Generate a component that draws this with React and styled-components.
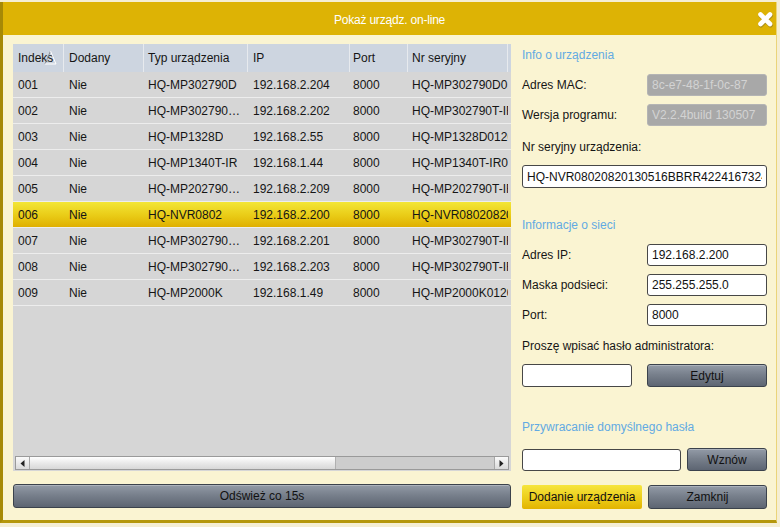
import React from 'react';
import styled, { createGlobalStyle } from 'styled-components';

const GlobalStyle = createGlobalStyle`
  html, body {
    margin: 0;
    padding: 0;
  }
  body {
    background: linear-gradient(#f5eed3 0, #f5eed3 524px, #e3e3e3 524px);
    font-family: "Liberation Sans", Arial, sans-serif;
    font-size: 12px;
    color: #151515;
  }
`;

const FONT = `12px "Liberation Sans", Arial, sans-serif`;
const COLS = '51px 80px 104px 102px 58px 100px';

const Window = styled.div`
  margin-top: 2px;
  width: 777px;
  height: 521px;
  box-sizing: border-box;
  border-left: 3px solid #a68906;
  border-bottom: 3px solid #b5970b;
  border-right: 1px solid #ead47a;
  background: #faf4d2;
  display: flex;
  flex-direction: column;
`;

const TitleBar = styled.div`
  position: relative;
  height: 33px;
  flex-shrink: 0;
  background: #ddb305;
  color: #fff;
  display: flex;
  align-items: center;
  justify-content: center;
  padding-top: 2px;
  box-sizing: border-box;
  font: ${FONT};
  letter-spacing: -0.2px;
`;

const CloseButton = styled.div`
  position: absolute;
  right: 1px;
  top: 8px;
  width: 19px;
  height: 19px;
`;

const Body = styled.div`
  flex: 1;
  display: flex;
  gap: 11px;
  padding: 9px 9px 12px 10px;
  min-height: 0;
`;

const LeftCol = styled.div`
  width: 498px;
  display: flex;
  flex-direction: column;
  gap: 13px;
`;

const TablePanel = styled.div`
  flex: 1;
  background: #d6d6d6;
  display: flex;
  flex-direction: column;
  overflow: hidden;
`;

const Rows = styled.div`
  flex: 1;
`;

const HeaderRow = styled.div`
  display: grid;
  grid-template-columns: ${COLS};
  height: 28px;
  background: #cdd5e0;
`;

const HeaderCell = styled.div`
  position: relative;
  display: flex;
  align-items: center;
  padding-left: ${({ $pad }) => $pad}px;
  border-right: 1px solid #e7eaee;
  white-space: nowrap;
  overflow: hidden;
`;

const SortMark = styled.svg`
  position: absolute;
  left: 31px;
  top: 6px;
`;

const Row = styled.div`
  display: grid;
  grid-template-columns: ${COLS};
  height: 26px;
  box-sizing: border-box;
  border-bottom: 1px solid #ededed;
  background: ${({ $selected }) =>
    $selected ? 'linear-gradient(#f3e637, #e9cb16 55%, #dfaf00)' : 'transparent'};
`;

const Cell = styled.div`
  display: flex;
  align-items: center;
  padding: 0 ${({ $clip }) => ($clip ? 0 : 3)}px 0 ${({ $pad }) => $pad}px;
  min-width: 0;
  span {
    white-space: nowrap;
    overflow: hidden;
    text-overflow: ${({ $clip }) => ($clip ? 'clip' : 'ellipsis')};
  }
`;

const ScrollBar = styled.div`
  height: 14px;
  margin: 0 2px 1px 2px;
  display: flex;
  box-sizing: border-box;
  border: 1px solid #9a9a9a;
  background: #cdcdcd;
`;

const ScrollArrow = styled.div`
  width: 13px;
  display: flex;
  align-items: center;
  justify-content: center;
  background: linear-gradient(#fafafa, #dadada);
  border-${({ $side }) => ($side === 'left' ? 'right' : 'left')}: 1px solid #a8a8a8;
`;

const ScrollTrack = styled.div`
  flex: 1;
  display: flex;
`;

const ScrollThumb = styled.div`
  width: 305px;
  background: linear-gradient(#ffffff, #e6e6e6 60%, #d8d8d8);
  border-right: 1px solid #b0b0b0;
`;

const Button = styled.button`
  width: ${({ $w }) => ($w ? `${$w}px` : '100%')};
  height: ${({ $h }) => $h}px;
  flex-shrink: 0;
  box-sizing: border-box;
  padding: 0;
  font: ${FONT};
  color: #111;
  border-radius: 3px;
  border: 1px solid #3b424c;
  background: linear-gradient(#939ba7, #78808c 45%, #5d6572);
  box-shadow: inset 0 1px 0 rgba(255, 255, 255, 0.25);
`;

const YellowButton = styled(Button)`
  border: none;
  border-radius: 2px;
  box-shadow: none;
  background: linear-gradient(#f6e53e, #eccd1a 55%, #e2b300);
`;

const RightCol = styled.div`
  width: 245px;
  display: flex;
  flex-direction: column;
`;

const SectionTitle = styled.div`
  height: 22px;
  line-height: 22px;
  color: #62aae2;
  margin-top: ${({ $mt }) => $mt}px;
`;

const Label = styled.div`
  height: 16px;
  line-height: 16px;
  margin-top: ${({ $mt }) => $mt || 0}px;
`;

const FieldRow = styled.div`
  display: flex;
  align-items: center;
  justify-content: space-between;
  margin-top: ${({ $mt }) => $mt}px;
`;

const TextInput = styled.input`
  width: ${({ $w }) => ($w ? `${$w}px` : '100%')};
  height: ${({ $h }) => $h}px;
  box-sizing: border-box;
  border: 1px solid #474747;
  border-radius: 3px;
  background: #fff;
  padding: 0 4px;
  font: ${FONT};
  color: #111;
  outline: none;
  &:disabled {
    background: #a8a8a8;
    border-color: #b4b4b4;
    color: #d3d3d3;
  }
`;

const columns = [
  { title: 'Indeks', pad: 5 },
  { title: 'Dodany', pad: 5 },
  { title: 'Typ urządzenia', pad: 4 },
  { title: 'IP', pad: 5 },
  { title: 'Port', pad: 3 },
  { title: 'Nr seryjny', pad: 4 },
];

const devices = [
  ['001', 'Nie', 'HQ-MP302790D', '192.168.2.204', '8000', 'HQ-MP302790D0120130507'],
  ['002', 'Nie', 'HQ-MP302790T-IR', '192.168.2.202', '8000', 'HQ-MP302790T-IR0120130507'],
  ['003', 'Nie', 'HQ-MP1328D', '192.168.2.55', '8000', 'HQ-MP1328D0120130415'],
  ['004', 'Nie', 'HQ-MP1340T-IR', '192.168.1.44', '8000', 'HQ-MP1340T-IR0120130415'],
  ['005', 'Nie', 'HQ-MP202790T-IR', '192.168.2.209', '8000', 'HQ-MP202790T-IR0120130507'],
  ['006', 'Nie', 'HQ-NVR0802', '192.168.2.200', '8000', 'HQ-NVR08020820130516'],
  ['007', 'Nie', 'HQ-MP302790T-IR', '192.168.2.201', '8000', 'HQ-MP302790T-IR0120130507'],
  ['008', 'Nie', 'HQ-MP302790T-IR', '192.168.2.203', '8000', 'HQ-MP302790T-IR0120130507'],
  ['009', 'Nie', 'HQ-MP2000K', '192.168.1.49', '8000', 'HQ-MP2000K0120130415'],
];

const CloseIcon = () => (
  <svg width="19" height="19" viewBox="0 0 19 19">
    <g stroke="#8d7a2a" strokeWidth="5" strokeLinecap="round" opacity="0.6">
      <path d="M5 5.5 L14.5 15 M14.5 5.5 L5 15" />
    </g>
    <g stroke="#ffffff" strokeWidth="4.6" strokeLinecap="round">
      <path d="M4.5 4.5 L14 14 M14 4.5 L4.5 14" />
    </g>
  </svg>
);

const Arrow = ({ dir }) => (
  <svg width="5" height="7" viewBox="0 0 5 7">
    <path d={dir === 'left' ? 'M4.5 0 L0.5 3.5 L4.5 7 Z' : 'M0.5 0 L4.5 3.5 L0.5 7 Z'} fill="#222" />
  </svg>
);

export default function App() {
  return (
    <>
      <GlobalStyle />
      <Window>
        <TitleBar>
          Pokaż urządz. on-line
          <CloseButton>
            <CloseIcon />
          </CloseButton>
        </TitleBar>
        <Body>
          <LeftCol>
            <TablePanel>
              <Rows>
                <HeaderRow>
                  {columns.map((c, i) => (
                    <HeaderCell key={c.title} $pad={c.pad}>
                      {c.title}
                      {i === 0 && (
                        <SortMark width="13" height="15" viewBox="0 0 13 15">
                          <path d="M6.5 1 L1 14" stroke="#8a8f96" strokeWidth="1" fill="none" />
                          <path d="M6.5 1 L12 14 L1 14" stroke="#ffffff" strokeWidth="1" fill="none" />
                        </SortMark>
                      )}
                    </HeaderCell>
                  ))}
                </HeaderRow>
                {devices.map((d) => (
                  <Row key={d[0]} $selected={d[0] === '006'}>
                    {d.map((v, i) => (
                      <Cell key={i} $pad={columns[i].pad} $clip={i === 5}>
                        <span>{v}</span>
                      </Cell>
                    ))}
                  </Row>
                ))}
              </Rows>
              <ScrollBar>
                <ScrollArrow $side="left">
                  <Arrow dir="left" />
                </ScrollArrow>
                <ScrollTrack>
                  <ScrollThumb />
                </ScrollTrack>
                <ScrollArrow $side="right">
                  <Arrow dir="right" />
                </ScrollArrow>
              </ScrollBar>
            </TablePanel>
            <Button $h={24}>Odśwież co 15s</Button>
          </LeftCol>

          <RightCol>
            <SectionTitle $mt={0}>Info o urządzenia</SectionTitle>
            <FieldRow $mt={8}>
              <span>Adres MAC:</span>
              <TextInput $w={120} $h={22} disabled defaultValue="8c-e7-48-1f-0c-87" />
            </FieldRow>
            <FieldRow $mt={8}>
              <span>Wersja programu:</span>
              <TextInput $w={120} $h={22} disabled defaultValue="V2.2.4build 130507" />
            </FieldRow>
            <Label $mt={13}>Nr seryjny urządzenia:</Label>
            <FieldRow $mt={10}>
              <TextInput $h={23} defaultValue="HQ-NVR08020820130516BBRR4224167324WCVU" />
            </FieldRow>

            <SectionTitle $mt={26}>Informacje o sieci</SectionTitle>
            <FieldRow $mt={8}>
              <span>Adres IP:</span>
              <TextInput $w={120} $h={22} defaultValue="192.168.2.200" />
            </FieldRow>
            <FieldRow $mt={8}>
              <span>Maska podsieci:</span>
              <TextInput $w={120} $h={22} defaultValue="255.255.255.0" />
            </FieldRow>
            <FieldRow $mt={8}>
              <span>Port:</span>
              <TextInput $w={120} $h={22} defaultValue="8000" />
            </FieldRow>
            <Label $mt={12}>Proszę wpisać hasło administratora:</Label>
            <FieldRow $mt={10}>
              <TextInput $w={110} $h={23} type="password" />
              <Button $w={120} $h={23}>Edytuj</Button>
            </FieldRow>

            <SectionTitle $mt={29}>Przywracanie domyślnego hasła</SectionTitle>
            <FieldRow $mt={10}>
              <TextInput $w={159} $h={22} />
              <Button $w={80} $h={23}>Wznów</Button>
            </FieldRow>
            <FieldRow $mt={14}>
              <YellowButton $w={120} $h={24}>Dodanie urządzenia</YellowButton>
              <Button $w={119} $h={24}>Zamknij</Button>
            </FieldRow>
          </RightCol>
        </Body>
      </Window>
    </>
  );
}
